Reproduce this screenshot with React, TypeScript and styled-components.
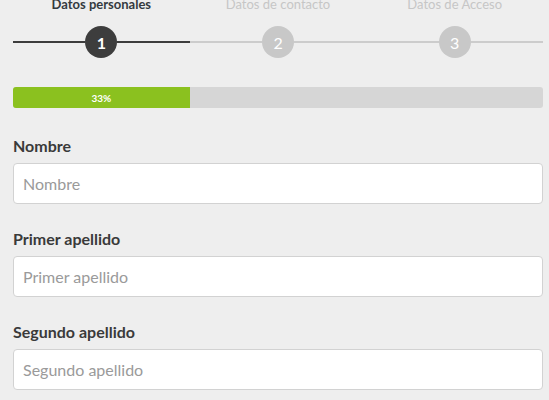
import styled, { createGlobalStyle } from "styled-components";

const GlobalStyle = createGlobalStyle`
html, body {
  margin: 0;
  padding: 0;
  overflow: hidden;
  background: #eeeeee;
  font-family: Lato, "Open Sans", sans-serif;
}
`;

const Page = styled.div`
width: 530px;
margin-left: 13px;
`;

const Steps = styled.div`
display: flex;
flex-direction: row;
`;

const Step = styled.div`
flex: 1;
display: flex;
flex-direction: column;
align-items: center;
`;

const StepTitle = styled.div<{ $active: boolean }>`
margin-top: -2px;
font-size: 13px;
line-height: 12px;
font-weight: ${p => (p.$active ? 700 : 400)};
color: ${p => (p.$active ? "#343a40" : "#c6c6c6")};
`;

const Track = styled.div`
margin-top: 16px;
width: 100%;
display: flex;
flex-direction: row;
align-items: center;
`;

const Segment = styled.div<{ $active: boolean }>`
flex: 1;
height: 2px;
background: ${p => (p.$active ? "#3d3d3d" : "#cccccc")};
`;

const Circle = styled.div<{ $active: boolean }>`
width: 32px;
height: 32px;
border-radius: 50%;
display: flex;
align-items: center;
justify-content: center;
background: ${p => (p.$active ? "#3d3d3d" : "#c8c8c8")};
color: #ffffff;
font-size: 16px;
font-weight: ${p => (p.$active ? 700 : 400)};
`;

const Progress = styled.div`
margin-top: 29px;
height: 21px;
border-radius: 3px;
background: #d6d6d6;
overflow: hidden;
`;

const ProgressFill = styled.div`
height: 100%;
background: #8bc11f;
color: #ffffff;
font-size: 10px;
font-weight: 700;
display: flex;
align-items: center;
justify-content: center;
`;

const Form = styled.form`
margin-top: 27px;
`;

const Field = styled.div`
margin-bottom: 24px;
`;

const Label = styled.label`
display: block;
margin-bottom: 6px;
font-size: 16px;
line-height: 22px;
font-weight: 700;
color: #3a3a3a;
`;

const Input = styled.input`
box-sizing: border-box;
width: 100%;
height: 41px;
padding: 0 9px;
border: 1px solid #d2d2d2;
border-radius: 4px;
background: #ffffff;
font-family: inherit;
font-size: 16px;
color: #333;
outline: none;
&::placeholder {
  color: #9a9a9a;
}
`;

const steps = ["Datos personales", "Datos de contacto", "Datos de Acceso"];
const current = 0;
const fields = ["Nombre", "Primer apellido", "Segundo apellido"];

export default function App() {
  const percent = Math.round(((current + 1) / steps.length) * 100);
  return (
    <>
      <GlobalStyle />
      <Page>
        <Steps>
          {steps.map((title, i) => (
            <Step key={title}>
              <StepTitle $active={i === current}>{title}</StepTitle>
              <Track>
                <Segment $active={i <= current} />
                <Circle $active={i <= current}>{i + 1}</Circle>
                <Segment $active={i <= current} />
              </Track>
            </Step>
          ))}
        </Steps>
        <Progress>
          <ProgressFill style={{ width: `${((current + 1) / steps.length) * 100}%` }}>
            {percent}%
          </ProgressFill>
        </Progress>
        <Form>
          {fields.map(name => (
            <Field key={name}>
              <Label>{name}</Label>
              <Input placeholder={name} />
            </Field>
          ))}
        </Form>
      </Page>
    </>
  );
}
